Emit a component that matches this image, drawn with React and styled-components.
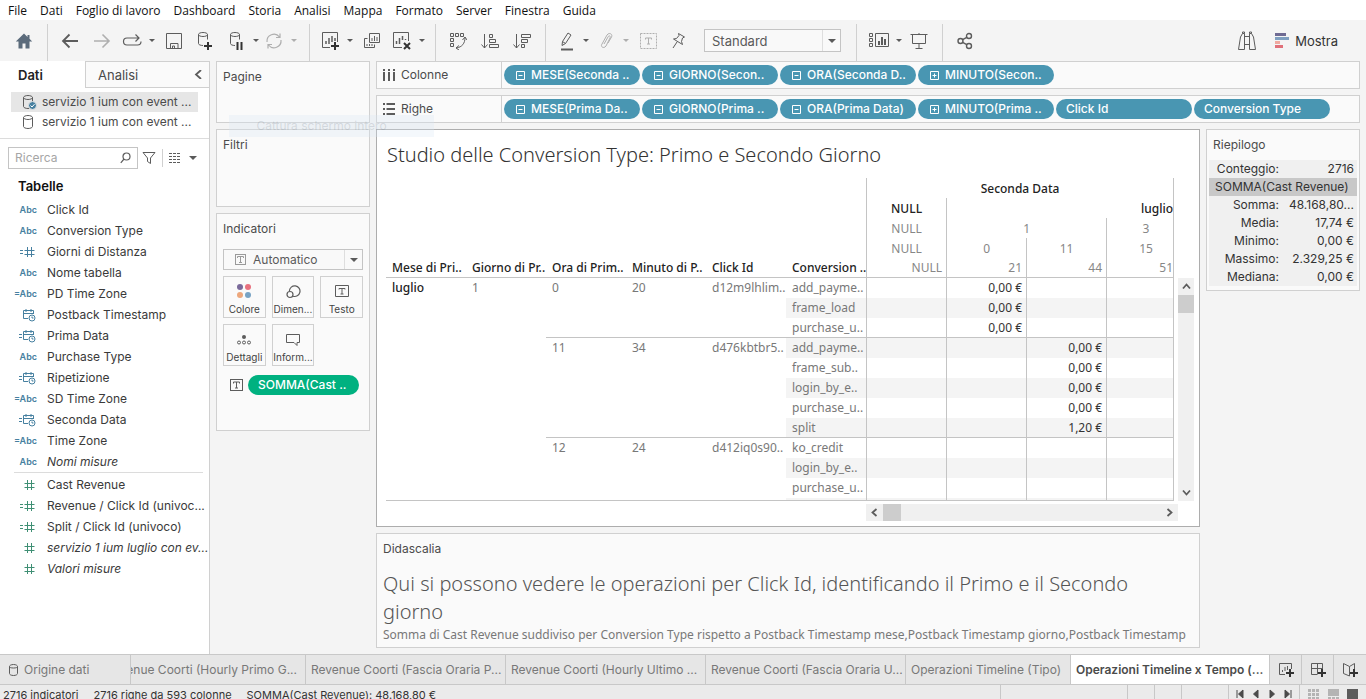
import React from "react";
import styled, { createGlobalStyle, css } from "styled-components";

const Global = createGlobalStyle`
  * { box-sizing: border-box; }
  body { margin: 0; overflow: hidden; background: #f4f4f4; }
  button, input, select { font: inherit; color: inherit; }
  button { border: 0; background: none; padding: 0; cursor: pointer; }
  ul { list-style: none; margin: 0; padding: 0; }
  h1, h2, h3, p { margin: 0; font-weight: 400; }
  table { border-collapse: separate; border-spacing: 0; }
`;

const LINE = "#d0d0d0";
const FONT_UI = `Inter, "Liberation Sans", sans-serif`;
const FONT_VIZ = `"Noto Sans", "Open Sans", sans-serif`;

const Page = styled.div`
  position: relative;
  display: flex;
  flex-direction: column;
  height: 100vh;
  overflow: hidden;
  background: #f4f4f4;
  color: #4b4b4b;
  font: 12px/18px ${FONT_UI};
`;

/* ---------- menu and toolbar ---------- */
const MenuBar = styled.nav`
  flex: none;
  display: flex;
  gap: 13px;
  height: 20px;
  padding: 1px 8px 0;
  background: #fff;
  color: #111;
  font: 12px/20px "Open Sans", "Noto Sans", sans-serif;
`;
const MenuItem = styled.button`
  white-space: nowrap;
`;
const Toolbar = styled.div`
  flex: none;
  display: flex;
  align-items: center;
  height: 41px;
`;
const ToolBox = styled.div`
  flex: none;
  display: flex;
  align-items: center;
  gap: 4px;
  margin-left: ${(p) => p.$gap}px;
  opacity: ${(p) => (p.$dim ? 0.45 : 1)};
`;
const ToolButton = styled.button`
  width: 24px;
  height: 24px;
  display: grid;
  place-items: center;
`;
const CaretButton = styled.button`
  width: 8px;
  height: 24px;
  display: grid;
  place-items: center;
`;
const Caret = styled.span`
  display: block;
  border: ${(p) => p.$size || 3}px solid transparent;
  border-top-color: #5a5a5a;
  border-bottom: 0;
`;
const Divider = styled.div`
  flex: none;
  align-self: flex-end;
  width: 1px;
  height: 37px;
  margin-left: ${(p) => p.$gap || 9}px;
  background: ${LINE};
`;
const SelectBox = styled.div`
  position: relative;
  display: flex;
  height: ${(p) => p.$h}px;
  width: ${(p) => p.$w}px;
  margin: ${(p) => p.$top || 0}px 0 0 ${(p) => p.$gap || 0}px;
  border: 1px solid #c4c4c4;
  background: #f9f9f9;
  font-size: ${(p) => p.$size || 12}px;
`;
const Select = styled.select`
  flex: 1;
  min-width: 0;
  appearance: none;
  border: 0;
  outline: 0;
  background: none;
  padding: 0 20px 0 ${(p) => p.$pad}px;
  color: #5a5a5a;
`;
const SelectCaret = styled.span`
  position: absolute;
  right: 0;
  top: 0;
  bottom: 0;
  width: 18px;
  border-left: 1px solid #dedede;
  display: grid;
  place-items: center;
  pointer-events: none;
`;
const SelectIcon = styled.span`
  position: absolute;
  left: 11px;
  top: 4px;
  height: 12px;
  display: flex;
  opacity: 0.6;
  pointer-events: none;
`;
const Push = styled.div`
  flex: 1;
`;
const ShowMe = styled.button`
  display: flex;
  align-items: center;
  gap: 5px;
  margin: 0 28px 0 16px;
  font-size: 13px;
  color: #333;
`;

/* ---------- workspace ---------- */
const Workspace = styled.div`
  flex: 1;
  min-height: 0;
  display: flex;
`;
const Sidebar = styled.aside`
  flex: none;
  width: 210px;
  border-right: 1px solid ${LINE};
  background: #fff;
`;
const PaneTabs = styled.div`
  display: flex;
  height: 27px;
  font-size: 13px;
`;
const PaneTab = styled.button`
  text-align: left;
  ${(p) =>
    p.$active
      ? css`
          width: 85px;
          padding-left: 18px;
          font-weight: 600;
          color: #222;
        `
      : css`
          flex: 1;
          display: flex;
          align-items: center;
          justify-content: space-between;
          padding: 0 6px 0 12px;
          background: #fafafa;
          border: solid ${LINE};
          border-width: 1px 0 1px 1px;
        `}
`;
const Sources = styled.ul`
  padding: 4px 11px 6px;
  border-bottom: 1px solid #dcdcdc;
`;
const Source = styled.li`
  display: flex;
  align-items: center;
  gap: 5px;
  height: 20px;
  padding-left: 10px;
  white-space: nowrap;
  background: ${(p) => (p.$selected ? "#e6e6e6" : "transparent")};
`;
const SearchRow = styled.div`
  display: flex;
  align-items: center;
  gap: 4px;
  padding: 8px 8px 6px;
`;
const SearchBox = styled.label`
  display: flex;
  align-items: center;
  width: 130px;
  height: 22px;
  padding: 0 6px;
  border: 1px solid #c4c4c4;
`;
const SearchInput = styled.input`
  flex: 1;
  min-width: 0;
  border: 0;
  outline: 0;
  padding: 0;
  &::placeholder {
    color: #a6a6a6;
  }
`;
const MiniButton = styled.button`
  display: grid;
  place-items: center;
  height: 18px;
`;
const ViewChoice = styled.div`
  display: flex;
  align-items: center;
  gap: 8px;
  margin-left: 2px;
  padding-left: 6px;
  border-left: 1px solid ${LINE};
`;
const SectionTitle = styled.h2`
  padding-left: 18px;
  font-size: 13px;
  font-weight: 600;
  line-height: 22px;
  color: #111;
`;
const Fields = styled.ul`
  margin: 2px 6px 0 14px;
  & + & {
    margin-top: 0;
    padding-top: 1px;
    border-top: 1px solid #dcdcdc;
  }
`;
const Field = styled.li`
  display: flex;
  align-items: center;
  height: 21px;
  color: #3a3a3a;
  white-space: nowrap;
  font-style: ${(p) => (p.$italic ? "italic" : "normal")};
`;
const Kind = styled.span`
  flex: none;
  display: flex;
  align-items: center;
  justify-content: ${(p) => (p.$text ? "flex-end" : "center")};
  width: ${(p) => (p.$text ? 23 : 26)}px;
  margin-right: ${(p) => (p.$text ? 10 : 7)}px;
  color: ${(p) => (p.$measure ? "#3f8f74" : "#4680a0")};
  font-size: 9px;
  font-weight: 600;
  font-style: normal;
`;
const Content = styled.main`
  flex: 1;
  min-width: 0;
  display: flex;
  gap: 6px;
  padding: 0 6px 6px;
`;
const Cards = styled.div`
  flex: none;
  width: 154px;
  display: flex;
  flex-direction: column;
  gap: 6px;
`;
const Card = styled.section`
  min-height: ${(p) => p.$h}px;
  padding: 6px;
  border: 1px solid ${LINE};
  background: #fafafa;
`;
const CardTitle = styled.h3`
  font-size: 12px;
  line-height: 18px;
`;
const MarkGrid = styled.div`
  display: grid;
  grid-template-columns: repeat(3, 1fr);
  gap: 6px;
  margin: 6px 0 9px;
`;
const MarkButton = styled.button`
  display: flex;
  flex-direction: column;
  align-items: center;
  height: 42px;
  padding-top: 5px;
  border: 1px solid ${LINE};
  font-size: 10px;
  line-height: 14px;
  color: #444;
  & svg {
    margin-bottom: 2px;
  }
`;
const MarkField = styled.div`
  display: flex;
  align-items: center;
  gap: 5px;
  padding-left: 7px;
`;
const Center = styled.div`
  flex: 1;
  min-width: 0;
  display: flex;
  flex-direction: column;
  gap: 6px;
`;
const Shelf = styled.div`
  flex: none;
  display: flex;
  height: 28px;
  border: 1px solid ${LINE};
  background: #fafafa;
`;
const ShelfLabel = styled.div`
  flex: none;
  display: flex;
  align-items: center;
  gap: 6px;
  width: 125px;
  padding-left: 6px;
  border-right: 1px solid ${LINE};
`;
const Pills = styled.div`
  flex: 1;
  min-width: 0;
  display: flex;
  align-items: center;
  gap: 2px;
  padding-left: 2px;
`;
const Pill = styled.button`
  flex: none;
  display: flex;
  align-items: center;
  gap: 6px;
  width: ${(p) => p.$w || 136}px;
  height: 20px;
  padding-left: ${(p) => (p.$boxed ? 12 : 10)}px;
  border-radius: 10px;
  background: ${(p) => (p.$green ? "#00b180" : "#4996b2")};
  color: #fff;
  font-weight: 500;
  white-space: nowrap;
`;
const Stage = styled.div`
  flex: 1;
  min-height: 0;
  display: flex;
  align-items: flex-start;
  gap: 6px;
`;
const StageMain = styled.div`
  flex: 1;
  min-width: 0;
  align-self: stretch;
  display: flex;
  flex-direction: column;
  gap: 6px;
`;
const View = styled.section`
  flex: 1;
  min-height: 0;
  display: flex;
  flex-direction: column;
  padding: 10px 5px 5px 9px;
  border: 1px solid #adadad;
  background: #fff;
  font-family: ${FONT_VIZ};
`;
const ViewTitle = styled.h1`
  height: 38px;
  padding-left: 1px;
  font-size: 20px;
  font-weight: 300;
  line-height: 30px;
  color: #333;
  white-space: nowrap;
`;
const ViewGrid = styled.div`
  flex: 1;
  min-height: 0;
  display: grid;
  grid-template-columns: minmax(0, 1fr) 16px;
  grid-template-rows: minmax(0, 1fr) 17px;
  gap: 3px 4px;
`;
const Clip = styled.div`
  overflow: hidden;
  border-bottom: 1px solid #c4c4c4;
  border-right: 1px solid #c4c4c4;
`;
const Cross = styled.table`
  width: 100%;
  table-layout: fixed;
  line-height: 18px;
`;
const Col = styled.col`
  width: ${(p) => (p.$auto ? "auto" : "80px")};
`;
const HeadCell = styled.th`
  height: 20px;
  padding: 1px ${(p) => (p.$flush ? 0 : 4)}px 0 ${(p) => p.$pad || 0}px;
  text-align: ${(p) => p.$align || "center"};
  font-weight: ${(p) => (p.$strong ? 500 : 400)};
  color: ${(p) => (p.$strong ? "#222" : "#878787")};
  border-left: ${(p) => (p.$rule ? "1px solid #c4c4c4" : "0")};
  border-bottom: ${(p) => (p.$base ? "1px solid #c4c4c4" : "0")};
  white-space: nowrap;
`;
const RowHead = styled.th`
  height: 20px;
  padding: 0 0 0 6px;
  text-align: left;
  font-weight: ${(p) => (p.$strong ? 500 : 400)};
  color: ${(p) => (p.$strong ? "#222" : "#787878")};
  background: ${(p) => (p.$band ? "#f4f4f4" : "transparent")};
  border-bottom: ${(p) => (p.$base ? "1px solid #c4c4c4" : "0")};
  white-space: nowrap;
`;
const Value = styled.td`
  height: 20px;
  padding: 0 4px 0 0;
  text-align: right;
  color: #333;
  background: ${(p) => (p.$band ? "#f4f4f4" : "transparent")};
  border-left: 1px solid #c4c4c4;
  border-bottom: ${(p) => (p.$base ? "1px solid #c4c4c4" : "0")};
`;
const VScroll = styled.div`
  display: flex;
  flex-direction: column;
  margin-top: 100px;
  background: #f0f0f0;
`;
const HScroll = styled.div`
  display: flex;
  margin: 0 -4px 0 480px;
  background: #f0f0f0;
`;
const ScrollButton = styled.button`
  flex: none;
  width: 17px;
  height: 17px;
  display: grid;
  place-items: center;
`;
const Thumb = styled.div`
  width: ${(p) => (p.$vertical ? 16 : 18)}px;
  height: ${(p) => (p.$vertical ? 18 : 17)}px;
  background: #cdcdcd;
`;
const Caption = styled.section`
  flex: none;
  height: 115px;
  overflow: hidden;
  padding: 6px;
  border: 1px solid ${LINE};
  background: #fafafa;
`;
const CaptionLead = styled.p`
  margin-top: 12px;
  font: 300 20px/28px ${FONT_VIZ};
  color: #555;
`;
const CaptionText = styled.p`
  font: 12px/18px ${FONT_VIZ};
  color: #787878;
`;
const Summary = styled.section`
  flex: none;
  width: 154px;
  min-height: 162px;
  padding: 6px 2px 3px;
  border: 1px solid ${LINE};
  background: #fafafa;
  & h3 {
    padding: 0 4px 6px;
  }
`;
const SummaryTable = styled.table`
  width: 100%;
  background: #f0f0f0;
  color: #333;
  & th,
  & td {
    height: 18px;
    padding: 0 3px 0 0;
    font-weight: 400;
    line-height: 18px;
    text-align: right;
    white-space: nowrap;
  }
  & th {
    width: 70px;
    padding: 0;
  }
  & th[colspan] {
    padding-left: 6px;
    background: #c8c8c8;
    text-align: left;
  }
`;

/* ---------- bottom bars ---------- */
const SheetTabs = styled.div`
  flex: none;
  display: flex;
  height: 31px;
  border: solid #c8c8c8;
  border-width: 1px 0;
  background: #e6e6e6;
  color: #787878;
`;
const SheetTab = styled.button`
  flex: ${(p) => (p.$w ? `0 0 ${p.$w}px` : "1 1 0")};
  min-width: 0;
  display: flex;
  align-items: center;
  justify-content: ${(p) => (p.$tail ? "flex-end" : "flex-start")};
  gap: 6px;
  overflow: hidden;
  padding: 0 ${(p) => (p.$tail ? 8 : 0)}px 0 ${(p) => p.$pad ?? 5}px;
  border-right: 1px solid #c8c8c8;
  white-space: nowrap;
  ${(p) =>
    p.$active &&
    css`
      background: #fff;
      color: #4b4b4b;
      font-weight: 600;
    `}
`;
const AddSheet = styled.button`
  flex: 0 0 32px;
  display: grid;
  place-items: center;
  border-right: 1px solid #c8c8c8;
  &:last-child {
    border-right: 0;
  }
`;
const StatusBar = styled.footer`
  flex: none;
  display: flex;
  height: 14px;
  overflow: hidden;
  background: #ebebeb;
  color: #333;
  font-size: 11px;
  line-height: 20px;
  white-space: nowrap;
`;
const StatusText = styled.div`
  flex: 1;
  display: flex;
  gap: 15px;
  padding-left: 3px;
`;
const StatusCell = styled.div`
  width: ${(p) => p.$w}px;
  display: flex;
  align-items: flex-start;
  justify-content: space-evenly;
  padding: 4px 0 0;
  border-left: 1px solid #c8c8c8;
`;
const Ghost = styled.div`
  position: absolute;
  left: 229px;
  top: 115px;
  width: 205px;
  height: 22px;
  background: rgba(215, 230, 245, 0.28);
  color: rgba(120, 130, 140, 0.22);
  text-align: center;
  line-height: 22px;
  padding-right: 20px;
  pointer-events: none;
`;

/* ---------- icons ---------- */
const Svg = ({ w = 18, h = 18, children, sw = 1 }) => (
  <svg width={w} height={h} fill="none" stroke="#5c5c5c" strokeWidth={sw} aria-hidden="true">
    {children}
  </svg>
);
const plus = (x, y) => <path d={`M${x} ${y - 4}v8M${x - 4} ${y}h8`} stroke="#333" strokeWidth="2" />;
const T = ({ dashed, w = 13, h = 12 }) => (
  <Svg w={w} h={h}>
    <rect x=".5" y=".5" width={w - 1} height={h - 1} strokeDasharray={dashed ? "2 1" : undefined} />
    <path d={`M${w / 2 - 3} ${h / 2 - 1.5}v-1.5h6v1.5M${w / 2} ${h / 2 - 3}v6M${w / 2 - 1.5} ${h / 2 + 3}h3`} />
  </Svg>
);
const db = "M3.5 3.5v9c0 1.2 2 2 4.5 2M3.5 3.5C3.5 2.3 5.5 1.500 8 1.500s4.500.8 4.500 2-2 2-4.500 2-4.500-.8-4.500-2zM12.500 3.500v5";
const icons = {
  home: (
    <Svg>
      <path d="M9 1.500L.8 9.500h2.700V16.500h4v-5h3v5h4V9.500h2.700L14.500 6.800V3h-2v1.900z" fill="#5b6b7b" stroke="none" />
    </Svg>
  ),
  back: (
    <Svg sw={1.8}>
      <path d="M17 9H2M8.500 2.500L2 9l6.500 6.500" />
    </Svg>
  ),
  forward: (
    <Svg sw={1.6}>
      <path d="M1 9h15M9.500 2.500L16 9l-6.500 6.500" />
    </Svg>
  ),
  loop: (
    <Svg w={20} h={18} sw={1.2}>
      <path d="M17 6H5a3.500 3.500 0 000 7h10.500A3.500 3.500 0 0019 9.500M13.500 2.500L17 6l-3.500 3.500" />
    </Svg>
  ),
  save: (
    <Svg>
      <path d="M1.500 1.500h15v15h-15zM5.500 16.500v-5h7.500v5M7.500 16.500V14h2v2.500" />
    </Svg>
  ),
  dbAdd: (
    <Svg w={18} h={20}>
      <path d={db} />
      {plus(13, 15)}
    </Svg>
  ),
  dbPause: (
    <Svg w={18} h={20}>
      <path d={db} />
      <path d="M10.500 11v8M14.500 11v8" stroke="#333" strokeWidth="2" />
    </Svg>
  ),
  refresh: (
    <Svg sw={1.2}>
      <path d="M2 10a7 7 0 0112.500-5M16 8a7 7 0 01-12.500 5M15 1.500v4h-4M3 16.500v-4h4" />
    </Svg>
  ),
  sheetNew: (
    <Svg w={20} h={20}>
      <path d="M10 16.500H2.500v-15h15V11" />
      <path d="M6 13v-3M9 13V7M12 11V5M15 10V7" strokeWidth="1.500" />
      {plus(15, 15)}
    </Svg>
  ),
  duplicate: (
    <Svg w={18} h={18}>
      <path d="M6.500 1.500h10v9h-10zM4.500 6.500h-3v9h10v-3M9 9V6M11.500 9V4M14 9V5M4 14v-2M6.500 14v-2M9 14v-2" />
    </Svg>
  ),
  clear: (
    <Svg w={20} h={20}>
      <path d="M10 16.500H1.500v-15h15V10" />
      <path d="M4.500 13v-3M7.500 13V7M10.500 9V5M13.500 9V8" strokeWidth="1.500" />
      <path d="M12 12l6 6M18 12l-6 6" stroke="#333" strokeWidth="2" />
    </Svg>
  ),
  swap: (
    <Svg>
      <path d="M1.500 1.500h3v3h-3zM6.500 1.500h3v3h-3zM11.500 1.500h3v3h-3zM1.500 6.500h3v3h-3zM1.500 11.500h3v3h-3zM16 5.500c0 6-3 9.500-8.500 10.500M13.500 8L16 5l2 3M10 13.500L7 16l3 2" />
    </Svg>
  ),
  sortAsc: (
    <Svg w={20}>
      <path d="M4.500 2v14M1.500 12.500l3 3.500 3-3.500M9.500 2.500h3v3h-3zM9.500 7.500h6v3h-6zM9.500 12.500h9v3h-9z" />
    </Svg>
  ),
  sortDesc: (
    <Svg w={20}>
      <path d="M4.500 2v14M1.500 12.500l3 3.500 3-3.500M9.500 2.500h9v3h-9zM9.500 7.500h6v3h-6zM9.500 12.500h3v3h-3z" />
    </Svg>
  ),
  pen: (
    <Svg w={16} h={20}>
      <path d="M4.500 10.500L10 2l3 2-5.500 8.500-3.500 2zM4.500 10.500l3 2" />
      <path d="M3 18.500h12" strokeWidth="2" />
    </Svg>
  ),
  clip: (
    <Svg w={14} h={18}>
      <path d="M5 12l4-7c1-2 3-1 2 1L7 14c-2 3-6 1-4-2l5-9c2-3 6-1 4.500 2L9 11" />
    </Svg>
  ),
  text: <T dashed w={17} h={16} />,
  pin: (
    <Svg w={16} h={18}>
      <path d="M8.500 1.500l6 3.500-2 1-1 3.500 1 3-9-5.500 3-.5 2.500-3zM7 10l-4 6" />
    </Svg>
  ),
  cards: (
    <Svg w={22} h={18}>
      <path d="M1.500 1.500h3v3h-3zM1.500 6.500h3v3h-3zM1.500 11.500h3v3h-3zM7.500 1.500h13v13h-13z" />
      <path d="M11 13V9M14 13V5M17 13V7" strokeWidth="2" />
    </Svg>
  ),
  present: (
    <Svg>
      <path d="M.5 2.500h17M2.500 3v8.500h13V3M9 1v1.500M9 11.500v5M5.500 16.500h7" />
    </Svg>
  ),
  share: (
    <Svg sw={1.4}>
      <circle cx="4.500" cy="9" r="2.500" />
      <circle cx="13" cy="4" r="2.500" />
      <circle cx="13" cy="14" r="2.500" />
      <path d="M6.600 7.700l4.200-2.400M6.600 10.300l4.200 2.400" />
    </Svg>
  ),
  binoculars: (
    <Svg w={20} h={20}>
      <path d="M1.500 18.500L3.500 6l2-3.500h2V18.500zM18.500 18.500L16.500 6l-2-3.500h-2V18.500zM7.500 5.500h5M7.500 13.500h5M5.500 2.500V1h2v1.500M12.500 2.500V1h2v1.500" />
    </Svg>
  ),
  showMe: (
    <Svg w={15} h={16}>
      <g stroke="none">
        <path d="M0 0h11v3H0z" fill="#6f6b93" />
        <path d="M0 4h14v3H0z" fill="#7f9fc0" />
        <path d="M0 8h5v3H0z" fill="#f0a9a0" />
        <path d="M0 12h8v3H0z" fill="#e0707a" />
      </g>
    </Svg>
  ),
  columns: (
    <Svg w={12} h={12} sw={2}>
      <path d="M1 0v2M1 3v9M6 0v2M6 3v9M11 0v2M11 3v9" />
    </Svg>
  ),
  rows: (
    <Svg w={12} h={12} sw={2}>
      <path d="M0 1h2M3.500 1H12M0 6h2M3.500 6H12M0 11h2M3.500 11H12" />
    </Svg>
  ),
  funnel: (
    <Svg w={14} h={14}>
      <path d="M1 1.500h12L8.500 7v5.500l-3-2V7z" />
    </Svg>
  ),
  list: (
    <Svg w={12} h={11}>
      <path d="M0 .5h12M0 3.500h12M0 6.500h12M0 9.500h12" strokeDasharray="3 1" />
    </Svg>
  ),
  magnifier: (
    <Svg w={11} h={12} sw={1.2}>
      <circle cx="6.500" cy="4.500" r="3.500" />
      <path d="M4 7L.8 10.800" />
    </Svg>
  ),
  color: (
    <Svg w={16} h={18}>
      <g stroke="none">
        <circle cx="4" cy="5" r="3" fill="#7a6a9a" />
        <circle cx="12" cy="5" r="3" fill="#e8717f" />
        <circle cx="4" cy="13" r="3" fill="#eda77c" />
        <circle cx="12" cy="13" r="3" fill="#78a3c4" />
      </g>
    </Svg>
  ),
  size: (
    <Svg w={16} h={18} sw={1.2}>
      <path d="M4.400 9a5.300 5.300 0 113.600 5.200" />
      <circle cx="5" cy="12.500" r="3" />
    </Svg>
  ),
  label: (
    <Svg w={16} h={18}>
      <path d="M1.500 3.500h13v11h-13zM5 7.500V6.500h6v1M8 6.500v5.500M6.500 12h3" />
    </Svg>
  ),
  detail: (
    <Svg w={16} h={18}>
      <circle cx="8" cy="7" r="2" fill="#5c5c5c" stroke="none" />
      <circle cx="3" cy="12.500" r="1.500" />
      <circle cx="8" cy="12.500" r="1.500" />
      <circle cx="13" cy="12.500" r="1.500" />
    </Svg>
  ),
  tooltip: (
    <Svg w={16} h={18}>
      <path d="M1.500 4.500h13v8h-2.500v3L9 12.500H1.500z" />
    </Svg>
  ),
};
const Cylinder = ({ check }) => (
  <Svg w={16} h={16}>
    <path d="M2.500 3.500v9c0 1 2 2 4.500 2s4.500-1 4.500-2v-9M2.500 3.500c0-1 2-2 4.500-2s4.500 1 4.500 2-2 2-4.500 2-4.500-1-4.500-2z" />
    {check && (
      <>
        <circle cx="11.500" cy="11.500" r="4" fill="#4680a0" stroke="#e6e6e6" />
        <path d="M9.500 11.500l1.500 1.500 2.500-2.800" stroke="#fff" />
      </>
    )}
  </Svg>
);
const Hash = ({ eq }) => (
  <svg width="16" height="12" fill="none" stroke="currentColor" aria-hidden="true">
    <path d="M8.500 1v10M12.500 1v10M5.500 4.500h10M5.500 8.500h10" />
    {eq && <path d="M1 4.500h3M1 7.500h3" />}
  </svg>
);
const DateIcon = ({ eq }) => (
  <svg width="18" height="14" fill="none" stroke="currentColor" aria-hidden="true">
    <path d="M10 10.500H5.500v-8h10V6M5.500 5.500h10M8 1v3M13 1v3" />
    <circle cx="14" cy="10" r="3" />
    <path d="M14 8.500V10h1.500" />
    {eq && <path d="M1 5.500h3M1 8.500h3" />}
  </svg>
);
const Toggle = ({ open }) => (
  <svg width="9" height="9" fill="none" stroke="#fff" aria-hidden="true">
    <path d={`M.5.5h8v8h-8zM2.500 4.500h4${open ? "" : "M4.500 2.500v4"}`} />
  </svg>
);
const Chevron = ({ d }) => (
  <Svg w={9} h={9} sw={1.8}>
    <path d={d} />
  </Svg>
);

/* ---------- data ---------- */
const menu = ["File", "Dati", "Foglio di lavoro", "Dashboard", "Storia", "Analisi", "Mappa", "Formato", "Server", "Finestra", "Guida"];
const dimensions = [
  ["Abc", "Click Id"],
  ["Abc", "Conversion Type"],
  ["=#", "Giorni di Distanza"],
  ["Abc", "Nome tabella"],
  ["=Abc", "PD Time Zone"],
  ["date", "Postback Timestamp"],
  ["=date", "Prima Data"],
  ["Abc", "Purchase Type"],
  ["=date", "Ripetizione"],
  ["=Abc", "SD Time Zone"],
  ["=date", "Seconda Data"],
  ["=Abc", "Time Zone"],
  ["Abc", "Nomi misure", true],
];
const measures = [
  ["#", "Cast Revenue"],
  ["=#", "Revenue / Click Id (univoc..."],
  ["=#", "Split / Click Id (univoco)"],
  ["#", "servizio 1 ium luglio con ev...", true],
  ["#", "Valori misure", true],
];
const rowHeads = ["Mese di Pri..", "Giorno di Pr..", "Ora di Prim..", "Minuto di P..", "Click Id", "Conversion .."];
const groups = [
  { heads: ["luglio", "1", "0", "20", "d12m9lhlim.."], rows: [["add_payme..", "0,00 €"], ["frame_load", "0,00 €"], ["purchase_u..", "0,00 €"]], col: 1 },
  { heads: ["", "", "11", "34", "d476kbtbr5.."], rows: [["add_payme..", "0,00 €"], ["frame_sub..", "0,00 €"], ["login_by_e..", "0,00 €"], ["purchase_u..", "0,00 €"], ["split", "1,20 €"]], col: 2 },
  { heads: ["", "", "12", "24", "d412iq0s90.."], rows: [["ko_credit", ""], ["login_by_e..", ""], ["purchase_u..", ""], ["", ""]], col: 3 },
];
const flatRows = groups.flatMap((g, gi) =>
  g.rows.map(([type, value], i) => ({
    heads: i === 0 ? g.heads : ["", "", "", "", ""],
    type,
    value,
    col: g.col,
    base: i === g.rows.length - 1 && gi < groups.length - 1,
  }))
);
const summary = [
  ["Conteggio:", "2716"],
  ["SOMMA(Cast Revenue)"],
  ["Somma:", "48.168,80..."],
  ["Media:", "17,74 €"],
  ["Minimo:", "0,00 €"],
  ["Massimo:", "2.329,25 €"],
  ["Mediana:", "0,00 €"],
];
const marks = [["color", "Colore"], ["size", "Dimen..."], ["label", "Testo"], ["detail", "Dettagli"], ["tooltip", "Inform..."]];

/* ---------- parts ---------- */
const Tool = ({ icon, label, caret, gap = 8, dim }) => (
  <ToolBox $gap={gap} $dim={dim}>
    <ToolButton aria-label={label}>{icons[icon]}</ToolButton>
    {caret && (
      <CaretButton aria-label={`${label}: opzioni`}>
        <Caret />
      </CaretButton>
    )}
  </ToolBox>
);
const FieldRow = ({ kind, name, italic, measure }) => {
  const text = kind.includes("Abc");
  const eq = kind.startsWith("=");
  return (
    <Field $italic={italic}>
      <Kind $text={text} $measure={measure}>
        {text ? kind : kind.includes("#") ? <Hash eq={eq} /> : <DateIcon eq={eq} />}
      </Kind>
      {name}
    </Field>
  );
};
const ShelfRow = ({ icon, label, pills }) => (
  <Shelf>
    <ShelfLabel>
      {icons[icon]}
      {label}
    </ShelfLabel>
    <Pills>
      {pills.map(([mark, text]) => (
        <Pill key={text} $boxed={!!mark}>
          {mark && <Toggle open={mark === "-"} />}
          {text}
        </Pill>
      ))}
    </Pills>
  </Shelf>
);

export default function App() {
  return (
    <Page>
      <Global />
      <MenuBar>
        {menu.map((m) => (
          <MenuItem key={m}>{m}</MenuItem>
        ))}
      </MenuBar>
      <Toolbar>
        <Tool icon="home" label="Inizio" gap={12} />
        <Divider $gap={11} />
        <Tool icon="back" label="Annulla" gap={10} />
        <Tool icon="forward" label="Ripeti" dim />
        <Tool icon="loop" label="Riproduci" gap={6} caret />
        <Tool icon="save" label="Salva" gap={6} />
        <Tool icon="dbAdd" label="Nuova origine dati" gap={6} />
        <Tool icon="dbPause" label="Sospendi aggiornamenti" gap={8} caret />
        <Tool icon="refresh" label="Aggiorna" gap={2} caret dim />
        <Divider $gap={11} />
        <Tool icon="sheetNew" label="Nuovo foglio" caret />
        <Tool icon="duplicate" label="Duplica" gap={6} />
        <Tool icon="clear" label="Cancella foglio" gap={6} caret />
        <Divider />
        <Tool icon="swap" label="Scambia" gap={10} />
        <Tool icon="sortAsc" label="Ordine crescente" />
        <Tool icon="sortDesc" label="Ordine decrescente" />
        <Divider $gap={11} />
        <Tool icon="pen" label="Evidenzia" gap={8} caret />
        <Tool icon="clip" label="Raggruppa" gap={4} caret dim />
        <Tool icon="text" label="Etichette" gap={6} dim />
        <Tool icon="pin" label="Fissa assi" gap={6} />
        <SelectBox $w={137} $h={23} $gap={14} $size={13}>
          <Select aria-label="Adatta" $pad={7}>
            <option>Standard</option>
          </Select>
          <SelectCaret>
            <Caret $size={4} />
          </SelectCaret>
        </SelectBox>
        <Divider $gap={15} />
        <Tool icon="cards" label="Mostra schede" gap={10} caret />
        <Tool icon="present" label="Presentazione" gap={4} />
        <Divider $gap={11} />
        <Tool icon="share" label="Condividi" gap={10} />
        <Push />
        <Tool icon="binoculars" label="Guida dati" />
        <ShowMe>
          {icons.showMe}
          Mostra
        </ShowMe>
      </Toolbar>

      <Workspace>
        <Sidebar>
          <PaneTabs>
            <PaneTab $active>Dati</PaneTab>
            <PaneTab>
              Analisi
              <Chevron d="M7 0L2 4.500 7 9" />
            </PaneTab>
          </PaneTabs>
          <Sources>
            <Source $selected>
              <Cylinder check />
              servizio 1 ium con event ...
            </Source>
            <Source>
              <Cylinder />
              servizio 1 ium con event ...
            </Source>
          </Sources>
          <SearchRow>
            <SearchBox>
              <SearchInput placeholder="Ricerca" aria-label="Ricerca" />
              {icons.magnifier}
            </SearchBox>
            <MiniButton aria-label="Filtra">{icons.funnel}</MiniButton>
            <ViewChoice>
              <MiniButton aria-label="Visualizza">{icons.list}</MiniButton>
              <MiniButton aria-label="Opzioni">
                <Caret $size={4} />
              </MiniButton>
            </ViewChoice>
          </SearchRow>
          <SectionTitle>Tabelle</SectionTitle>
          <Fields>
            {dimensions.map(([k, n, i]) => (
              <FieldRow key={n} kind={k} name={n} italic={i} />
            ))}
          </Fields>
          <Fields>
            {measures.map(([k, n, i]) => (
              <FieldRow key={n} kind={k} name={n} italic={i} measure />
            ))}
          </Fields>
        </Sidebar>

        <Content>
          <Cards>
            <Card $h={62}>
              <CardTitle>Pagine</CardTitle>
            </Card>
            <Card $h={78}>
              <CardTitle>Filtri</CardTitle>
            </Card>
            <Card $h={218}>
              <CardTitle>Indicatori</CardTitle>
              <SelectBox $w={140} $h={21} $top={11}>
                <SelectIcon>
                  <T w={11} h={11} />
                </SelectIcon>
                <Select aria-label="Tipo di indicatore" $pad={29}>
                  <option>Automatico</option>
                </Select>
                <SelectCaret>
                  <Caret $size={4} />
                </SelectCaret>
              </SelectBox>
              <MarkGrid>
                {marks.map(([icon, label]) => (
                  <MarkButton key={label}>
                    {icons[icon]}
                    {label}
                  </MarkButton>
                ))}
              </MarkGrid>
              <MarkField>
                <T />
                <Pill $green $w={111}>
                  SOMMA(Cast ..
                </Pill>
              </MarkField>
            </Card>
          </Cards>

          <Center>
            <ShelfRow
              icon="columns"
              label="Colonne"
              pills={[["-", "MESE(Seconda .."], ["-", "GIORNO(Secon.."], ["-", "ORA(Seconda D.."], ["+", "MINUTO(Secon.."]]}
            />
            <ShelfRow
              icon="rows"
              label="Righe"
              pills={[["-", "MESE(Prima Da.."], ["-", "GIORNO(Prima .."], ["-", "ORA(Prima Data)"], ["+", "MINUTO(Prima .."], ["", "Click Id"], ["", "Conversion Type"]]}
            />
            <Stage>
              <StageMain>
                <View>
                  <ViewTitle>Studio delle Conversion Type: Primo e Secondo Giorno</ViewTitle>
                  <ViewGrid>
                    <Clip>
                      <Cross>
                        <colgroup>
                          {[0, 1, 2, 3, 4, 5, 6, 7, 8].map((i) => (
                            <Col key={i} />
                          ))}
                          <Col $auto />
                        </colgroup>
                        <thead>
                          <tr>
                            <HeadCell colSpan={6} />
                            <HeadCell colSpan={4} $rule $flush $strong>Seconda Data</HeadCell>
                          </tr>
                          <tr>
                            <HeadCell colSpan={6} />
                            <HeadCell $rule $flush $strong>NULL</HeadCell>
                            <HeadCell colSpan={3} $rule $flush $strong $align="right">luglio</HeadCell>
                          </tr>
                          <tr>
                            <HeadCell colSpan={6} />
                            <HeadCell $rule $flush>NULL</HeadCell>
                            <HeadCell colSpan={2} $rule $flush>1</HeadCell>
                            <HeadCell $rule $flush $pad={12}>3</HeadCell>
                          </tr>
                          <tr>
                            <HeadCell colSpan={6} />
                            <HeadCell $rule $flush>NULL</HeadCell>
                            <HeadCell $rule $flush>0</HeadCell>
                            <HeadCell $rule $flush>11</HeadCell>
                            <HeadCell $rule $flush $pad={12}>15</HeadCell>
                          </tr>
                          <tr>
                            {rowHeads.map((h) => (
                              <HeadCell key={h} $pad={6} $flush $align="left" $strong $base>{h}</HeadCell>
                            ))}
                            <HeadCell $rule $align="right" $base>NULL</HeadCell>
                            <HeadCell $rule $align="right" $base>21</HeadCell>
                            <HeadCell $rule $align="right" $base>44</HeadCell>
                            <HeadCell $rule $align="right" $base $flush>51</HeadCell>
                          </tr>
                        </thead>
                        <tbody>
                          {flatRows.map((r, i) => (
                            <tr key={i}>
                              {r.heads.map((h, c) => (
                                <RowHead key={c} $strong={c === 0} $base={r.base && c > 1}>{h}</RowHead>
                              ))}
                              <RowHead $band={i % 2 === 1} $base={r.base}>{r.type}</RowHead>
                              {[0, 1, 2, 3].map((c) => (
                                <Value key={c} $band={i % 2 === 1} $base={r.base}>
                                  {c === r.col ? r.value : ""}
                                </Value>
                              ))}
                            </tr>
                          ))}
                        </tbody>
                      </Cross>
                    </Clip>
                    <VScroll>
                      <ScrollButton aria-label="Su"><Chevron d="M1 6.500l3.500-4 3.500 4" /></ScrollButton>
                      <Thumb $vertical />
                      <Push />
                      <ScrollButton aria-label="Giù"><Chevron d="M1 2.500l3.500 4 3.500-4" /></ScrollButton>
                    </VScroll>
                    <HScroll>
                      <ScrollButton aria-label="Sinistra"><Chevron d="M6.500 1l-4 3.500 4 3.500" /></ScrollButton>
                      <Thumb />
                      <Push />
                      <ScrollButton aria-label="Destra"><Chevron d="M2.500 1l4 3.500-4 3.500" /></ScrollButton>
                    </HScroll>
                  </ViewGrid>
                </View>
                <Caption>
                  <CardTitle>Didascalia</CardTitle>
                  <CaptionLead>Qui si possono vedere le operazioni per Click Id, identificando il Primo e il Secondo giorno</CaptionLead>
                  <CaptionText>
                    Somma di Cast Revenue suddiviso per Conversion Type rispetto a Postback Timestamp mese,Postback Timestamp giorno,Postback Timestamp ora,Postback Timestamp minuto,Postback Timestamp e Click Id
                  </CaptionText>
                </Caption>
              </StageMain>
              <Summary>
                <CardTitle>Riepilogo</CardTitle>
                <SummaryTable>
                  <tbody>
                    {summary.map(([k, v]) => (
                      <tr key={k}>
                        {v ? (
                          <>
                            <th scope="row">{k}</th>
                            <td>{v}</td>
                          </>
                        ) : (
                          <th colSpan={2}>{k}</th>
                        )}
                      </tr>
                    ))}
                  </tbody>
                </SummaryTable>
              </Summary>
            </Stage>
          </Center>
        </Content>
      </Workspace>

      <SheetTabs>
        <SheetTab $w={131} $pad={9}>
          <Svg w={9} h={12}>
            <path d="M.5 2.500v7c0 1 1.500 2 4 2s4-1 4-2v-7M.5 2.500c0-1 1.500-2 4-2s4 1 4 2-1.500 1.500-4 1.500-4-.5-4-1.500z" />
          </Svg>
          Origine dati
        </SheetTab>
        <SheetTab $w={175} $tail $pad={0}>Revenue Coorti (Hourly Primo G...</SheetTab>
        <SheetTab $w={200}>Revenue Coorti (Fascia Oraria P...</SheetTab>
        <SheetTab $w={200}>Revenue Coorti (Hourly Ultimo ...</SheetTab>
        <SheetTab $w={200}>Revenue Coorti (Fascia Oraria U...</SheetTab>
        <SheetTab $w={165}>Operazioni Timeline (Tipo)</SheetTab>
        <SheetTab $active>Operazioni Timeline x Tempo (...</SheetTab>
        <AddSheet aria-label="Nuovo foglio di lavoro">
          <Svg w={16} h={16}>
            <path d="M7 12.500H1.500v-11h12V7M4.500 10V8M7 9V5M9.500 8V4" />
            {plus(12, 11)}
          </Svg>
        </AddSheet>
        <AddSheet aria-label="Nuova dashboard">
          <Svg w={16} h={16}>
            <path d="M7 12.500H1.500v-11h11V7M1.500 6.500h11M7.500 1.500v11" />
            {plus(12, 11)}
          </Svg>
        </AddSheet>
        <AddSheet aria-label="Nuova storia">
          <Svg w={16} h={16}>
            <path d="M7.500 4.500l-6-3v10l6 2.500V4.500l5-3V7" />
            {plus(12, 11)}
          </Svg>
        </AddSheet>
      </SheetTabs>
      <StatusBar>
        <StatusText>
          <span>2716 indicatori</span>
          <span>2716 righe da 593 colonne</span>
          <span>SOMMA(Cast Revenue): 48.168,80 €</span>
        </StatusText>
        <StatusCell $w={127} />
        <StatusCell $w={27} />
        <StatusCell $w={27} />
        <StatusCell $w={47} />
        <StatusCell $w={71}>
          {["M1 1v8M7 1v8L2.500 5z", "M6 1v8L1.500 5z", "M3 1v8l4.500-4z", "M8 1v8M2 1v8l4.500-4z"].map((d) => (
            <svg key={d} width="9" height="10" fill="#4b4b4b" stroke="#4b4b4b" aria-hidden="true">
              <path d={d} />
            </svg>
          ))}
        </StatusCell>
        <StatusCell $w={67}>
          <svg width="11" height="11" fill="#b4b4b4" aria-hidden="true">
            <path d="M0 0h3v3H0zM4 0h3v3H4zM8 0h3v3H8zM0 4h3v3H0zM4 4h3v3H4zM8 4h3v3H8zM0 8h3v3H0zM4 8h3v3H4zM8 8h3v3H8z" />
          </svg>
          <svg width="11" height="11" fill="#b4b4b4" aria-hidden="true">
            <path d="M0 0h11v7H0zM0 8h3v3H0zM4 8h3v3H4zM8 8h3v3H8z" />
          </svg>
          <svg width="11" height="11" fill="#5c5c5c" aria-hidden="true">
            <path d="M0 0h11v11H0z" />
          </svg>
        </StatusCell>
      </StatusBar>
      <Ghost>Cattura schermo intero</Ghost>
    </Page>
  );
}
